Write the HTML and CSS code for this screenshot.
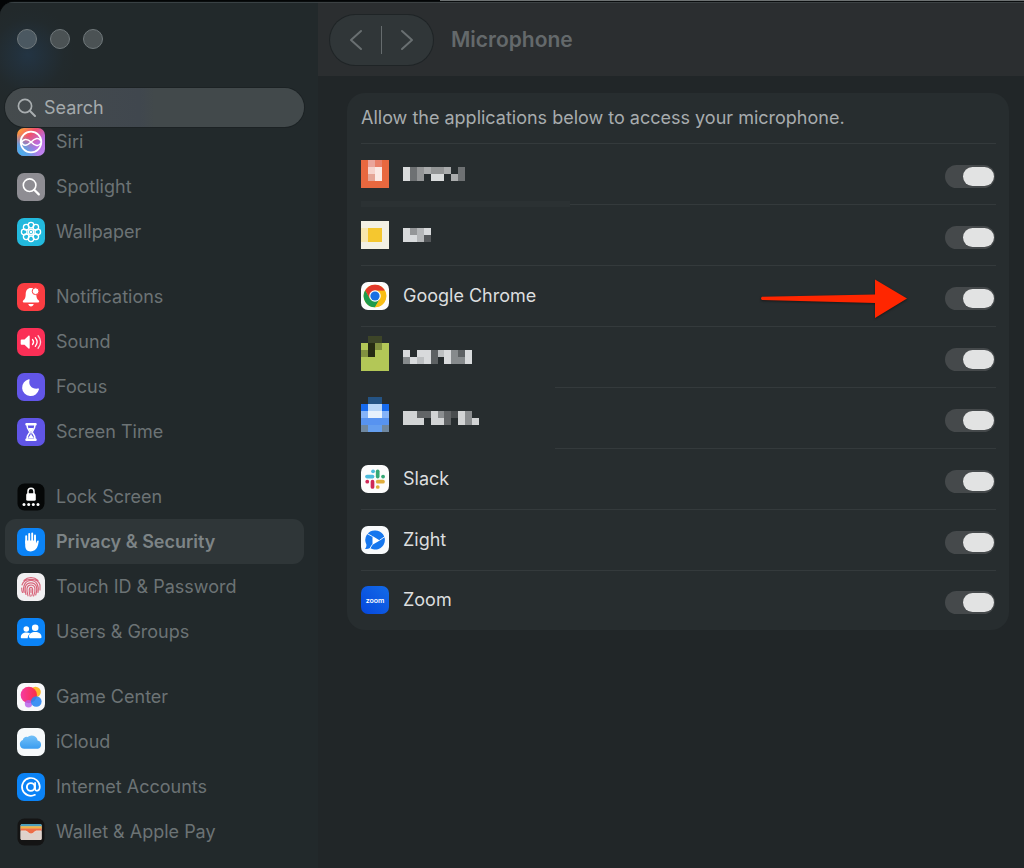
FILE: index.html
```html
<!DOCTYPE html>
<html lang="en">
<head>
<meta charset="utf-8">
<title>Microphone</title>
<link rel="stylesheet" href="styles.css">
</head>
<body>
<div class="window">
  <aside class="sidebar">
    <div class="lights">
      <button class="light" aria-label="Close"></button>
      <button class="light" aria-label="Minimize"></button>
      <button class="light" aria-label="Zoom"></button>
    </div>
    <label class="search">
      <svg width="20" height="20" viewBox="0 0 20 20" fill="none" stroke="#a9aeb0" stroke-width="1.7" stroke-linecap="round"><circle cx="8" cy="8" r="6.6"/><path d="M12.8 12.8 18 18" stroke-width="2"/></svg>
      <input type="search" placeholder="Search" aria-label="Search">
    </label>
    <nav class="nav">
      <div class="group">
        <a class="item" href="#siri"><svg class="icon" viewBox="0 0 28 28"><defs><linearGradient id="si" x1="0" y1="0" x2="1" y2="1"><stop offset="0" stop-color="#ffb52e"/><stop offset=".35" stop-color="#f0506c"/><stop offset=".65" stop-color="#b96be0"/><stop offset="1" stop-color="#c08cf5"/></linearGradient><radialGradient id="sb" cx="0" cy="1" r=".8"><stop offset="0" stop-color="#38b6f5"/><stop offset=".5" stop-color="#5aa8e8" stop-opacity=".9"/><stop offset="1" stop-color="#5aa8e8" stop-opacity="0"/></radialGradient></defs><rect width="28" height="28" rx="7" fill="url(#si)"/><rect width="28" height="28" rx="7" fill="url(#sb)"/><g fill="none" stroke="#fff" stroke-width="1.8"><circle cx="14" cy="14" r="10.3"/><path d="M4 15c2-4 6-5 10-1s8 5 10 1M4 13c2 6 6 5 10 1s8-5 10-1" stroke-width="1.6"/></g></svg><span>Siri</span></a>
        <a class="item" href="#spotlight"><svg class="icon" viewBox="0 0 28 28"><rect width="28" height="28" rx="7" fill="#8e8d93"/><g fill="none" stroke="#fff" stroke-linecap="round"><circle cx="12.6" cy="12.2" r="6.3" stroke-width="1.6"/><path d="m17.2 16.8 4.6 4.6" stroke-width="2.2"/></g></svg><span>Spotlight</span></a>
        <a class="item" href="#wallpaper"><svg class="icon" viewBox="0 0 28 28"><rect width="28" height="28" rx="7" fill="#23b9dd"/><g fill="none" stroke="#fff" stroke-width="1.3"><circle cx="14" cy="14" r="2.6"/><circle cx="14" cy="7.2" r="2.8"/><circle cx="18.8" cy="9.2" r="2.8"/><circle cx="20.8" cy="14" r="2.8"/><circle cx="18.8" cy="18.8" r="2.8"/><circle cx="14" cy="20.8" r="2.8"/><circle cx="9.2" cy="18.8" r="2.8"/><circle cx="7.2" cy="14" r="2.8"/><circle cx="9.2" cy="9.2" r="2.8"/></g><circle cx="14" cy="14" r="1.2" fill="#fff"/></svg><span>Wallpaper</span></a>
      </div>
      <div class="group">
        <a class="item" href="#notifications"><svg class="icon" viewBox="0 0 28 28"><rect width="28" height="28" rx="7" fill="#fb3d42"/><path d="M14 5c-3.6 0-5.2 2.6-5.3 6-.1 4.2-.9 5-2.5 6.6-.7.7-.5 1.9.6 1.9h14.4c1.100 0 1.300-1.200.6-1.900-1.600-1.600-2.400-2.400-2.500-6.600C19.200 7.600 17.600 5 14 5zM11.300 21h5.400c-.3 1.600-1.400 2.400-2.700 2.400s-2.400-.8-2.700-2.400z" fill="#fff"/><circle cx="18.600" cy="8.200" r="3.400" fill="#fff" stroke="#fb3d42" stroke-width="1"/></svg><span>Notifications</span></a>
        <a class="item" href="#sound"><svg class="icon" viewBox="0 0 28 28"><rect width="28" height="28" rx="7" fill="#fb2f56"/><path d="M4.500 11.500h3l4-3.700c.5-.5 1.200-.2 1.200.5v11.600c0 .7-.7 1-1.200.5l-4-3.700h-3c-.5 0-.8-.3-.8-.8v-3.600c0-.5.3-.8.800-.8z" fill="#fff"/><g fill="none" stroke="#fff" stroke-width="1.300" stroke-linecap="round"><path d="M15.500 11.500c1.300 1.500 1.300 3.500 0 5M18.300 9.700c2.200 2.600 2.200 6 0 8.600"/><path d="M21.100 7.800c3.300 3.700 3.300 8.700 0 12.400" opacity=".8"/></g></svg><span>Sound</span></a>
        <a class="item" href="#focus"><svg class="icon" viewBox="0 0 28 28"><rect width="28" height="28" rx="7" fill="#6256e8"/><path d="M11.800 6.300c.6-.3 1 .1.800.7-1.500 4.800 2.300 9.700 8.600 8.600.7-.1 1 .3.700.9A8.500 8.500 0 1 1 11.800 6.300z" fill="#fff"/></svg><span>Focus</span></a>
        <a class="item" href="#screentime"><svg class="icon" viewBox="0 0 28 28"><rect width="28" height="28" rx="7" fill="#6055e6"/><g fill="none" stroke="#fff" stroke-width="1.500"><path d="M10 7c0 4 1.500 5 3 7-1.500 2-3 3-3 7M18 7c0 4-1.500 5-3 7 1.500 2 3 3 3 7"/></g><g fill="#fff"><rect x="8.300" y="5" width="11.400" height="2.500" rx="1"/><rect x="8.300" y="20.500" width="11.400" height="2.500" rx="1"/><path d="M11.200 10h5.600c-.5 1.600-1.500 2.400-2.400 3.400v3.300l2.700 3.600h-6.200l2.700-3.600v-3.300c-.900-1-1.900-1.800-2.400-3.400z"/></g></svg><span>Screen Time</span></a>
      </div>
      <div class="group">
        <a class="item" href="#lock"><svg class="icon" viewBox="0 0 28 28"><rect x=".5" y=".5" width="27" height="27" rx="7" fill="#050707"/><path d="M11 11V8.200a3 3 0 0 1 6 0V11" fill="none" stroke="#fff" stroke-width="1.500"/><rect x="9.200" y="10.200" width="9.600" height="7.600" rx="1.500" fill="#fff"/><g fill="#fff"><circle cx="7" cy="21.500" r="1.500"/><circle cx="11.700" cy="21.500" r="1.500"/><circle cx="16.300" cy="21.500" r="1.500"/><circle cx="21" cy="21.500" r="1.500"/></g></svg><span>Lock Screen</span></a>
        <a class="item current" href="#privacy" aria-current="page"><svg class="icon" viewBox="0 0 28 28"><rect width="28" height="28" rx="7" fill="#0b83f6"/><g stroke="#fff" stroke-linecap="round" stroke-width="1.900"><path d="M9.200 15V8.200M12.200 14V5.900M15.200 14V5.500M18 15V7.400"/></g><path d="M8.200 12.500h10.700v3.200l1-2.400c.5-1.100 2-.9 1.800.3-.5 3.300-1.500 9.800-8 9.800-4 0-5.500-3-5.500-6z" fill="#fff"/></svg><span>Privacy &amp; Security</span></a>
        <a class="item" href="#touchid"><svg class="icon" viewBox="0 0 28 28"><rect width="28" height="28" rx="7" fill="#f1f0f2"/><g fill="none" stroke="#d8647a" stroke-width="1.150" stroke-linecap="round"><path d="M7 7.500c4-4 10-4 14 0M5 12C7 4.500 21 4.500 23 12v5M4.700 15c0 2 0 3 .8 4.500M7 19.500c-1.500-7 1.500-12 7-12s8.200 5 7 12M9 21.500c-2-7-.5-11.700 5-11.700s7 5.200 4.700 12.200M11 22.800c-2-6.300-1.500-10.800 3-10.800s5 4.700 2.600 11M13.200 23.300c-1.600-5-1.200-9 .8-9s2.200 4 .8 8.500M14 16.500v3"/></g></svg><span>Touch ID &amp; Password</span></a>
        <a class="item" href="#users"><svg class="icon" viewBox="0 0 28 28"><rect width="28" height="28" rx="7" fill="#0b83f6"/><g fill="#fff"><circle cx="9.300" cy="11" r="2.800"/><path d="M3.800 19.200c0-3 2.300-4.800 5.500-4.800 1.600 0 2.900.4 3.900 1.200-1.600 1.200-2.400 2.700-2.500 4.600H4.800c-.7 0-1-.3-1-1z"/><circle cx="18.200" cy="9.800" r="3.300"/><path d="M11.900 19c0-3 2.600-4.900 6.300-4.900s6.300 1.900 6.300 4.900c0 .8-.4 1.200-1.200 1.200H13.100c-.8 0-1.200-.4-1.200-1.200z"/></g></svg><span>Users &amp; Groups</span></a>
      </div>
      <div class="group">
        <a class="item" href="#gamecenter"><svg class="icon" viewBox="0 0 28 28"><defs><linearGradient id="gc" x1="0" y1="0" x2="1" y2="0"><stop offset="0" stop-color="#f53ba2"/><stop offset="1" stop-color="#fb2f45"/></linearGradient></defs><rect width="28" height="28" rx="7" fill="#f8f8fa"/><circle cx="18.500" cy="9" r="5.300" fill="#fdb92c"/><circle cx="11.800" cy="12" r="8.200" fill="url(#gc)"/><circle cx="11.500" cy="20.800" r="3.700" fill="#b55be8" opacity=".8"/><circle cx="19.300" cy="18.500" r="5.300" fill="#2a86f2" opacity=".9"/></svg><span>Game Center</span></a>
        <a class="item" href="#icloud"><svg class="icon" viewBox="0 0 28 28"><defs><linearGradient id="ic" x1="0" y1="0" x2="0" y2="1"><stop offset="0" stop-color="#72c0f8"/><stop offset="1" stop-color="#3a9df0"/></linearGradient></defs><rect width="28" height="28" rx="7" fill="#f6f9fb"/><path d="M7.200 20.700a4.500 4.500 0 0 1-1.400-8.700 3.500 3.500 0 0 1 4.700-2.900A6.100 6.100 0 0 1 20.600 12.500a4.200 4.200 0 0 1 .3 8.200z" fill="url(#ic)"/></svg><span>iCloud</span></a>
        <a class="item" href="#accounts"><svg class="icon" viewBox="0 0 28 28"><rect width="28" height="28" rx="7" fill="#0b83f6"/><g fill="none" stroke="#fff" stroke-linecap="round"><circle cx="13.800" cy="14" r="3.900" stroke-width="1.900"/><path d="M18.100 9.800v5.700c0 3.400 4.700 3 4.700-1.700a8.900 8.900 0 1 0-4.800 8" stroke-width="1.700"/></g></svg><span>Internet Accounts</span></a>
        <a class="item" href="#wallet"><svg class="icon" viewBox="0 0 28 28"><rect x=".5" y=".5" width="27" height="27" rx="7" fill="#141414"/><rect x="3.600" y="6" width="21" height="16" rx="1.500" fill="#e9dcd5"/><path d="M3.600 8.500V7.400Q3.600 6 5 6h18.200q1.400 0 1.400 1.400v1.100z" fill="#4a9dba"/><path d="M3.600 8.300h21v2.500h-21z" fill="#efb143"/><path d="M3.600 10.500h21v2H20c-1.200 0-2 .5-3 1.500-2 2-4 2-6 0-1-1-1.800-1.500-3-1.500H3.600z" fill="#ed6d47"/><path d="M3.600 13.200H8c1.200 0 1.800.5 2.800 1.400 2 1.900 4.400 1.900 6.400 0 1-.9 1.600-1.400 2.800-1.400h4.600v7.300q0 1.500-1.500 1.500h-18q-1.500 0-1.500-1.500z" fill="#dfd2cb"/></svg><span>Wallet &amp; Apple Pay</span></a>
      </div>
    </nav>
  </aside>
  <main class="main">
    <header class="toolbar">
      <div class="pager">
        <button aria-label="Back"><svg width="14" height="22" viewBox="0 0 14 22"><path d="M12 2 2 11l10 9"/></svg></button>
        <span class="bar"></span>
        <button aria-label="Forward"><svg width="14" height="22" viewBox="0 0 14 22"><path d="m2 2 10 9-10 9"/></svg></button>
      </div>
      <h1>Microphone</h1>
    </header>
    <section class="card">
      <p class="intro">Allow the applications below to access your microphone.</p>
      <ul class="apps">
        <li class="app">
          <label for="a1"><svg class="mosaic" width="28" height="28" viewBox="0 0 4 4"><path fill="#e8683f" d="M0 0h4v4H0z"/><path fill="#e98069" d="M2 0h1v1H2z"/><path fill="#eaa59b" d="M1 0h1v1H1z"/><path fill="#f6d3cc" d="M1 1h1v1H1z"/><path fill="#fbe9e4" d="M2 1h1v2H2z"/><path fill="#e5a596" d="M1 2h1v1H1z"/></svg>
          <svg class="mosaic" width="62" height="14" viewBox="0 0 9 2"><path fill="#d9dbdc" d="M0 0h1v2H0zM4 1h2v1H4z"/><path fill="#6e7173" d="M1 0h1v2H1zM8 0h1v2H8z"/><path fill="#939596" d="M2 0h1v2H2zM4 0h2v1H4z"/><path fill="#aaacad" d="M3 0h1v1H3zM6 0h1v1H6zM7 1h1v1H7z"/></svg></label>
          <input id="a1" class="switch" type="checkbox" role="switch" aria-label="First application" checked>
        </li>
        <li class="app smudged">
          <label for="a2"><svg class="mosaic" width="28" height="28" viewBox="0 0 4 4"><path fill="#f3f0e4" d="M0 0h4v4H0z"/><path fill="#f7e6ad" d="M0 1h1v1H0zM0 2h1v1H0z"/><path fill="#f5c72f" d="M1 1h2v2H1z"/></svg>
          <svg class="mosaic" width="28" height="14" viewBox="0 0 4 2"><path fill="#d8dadc" d="M0 0h1v2H0zM1 1h1v1H1zM3 0h1v1H3z"/><path fill="#949698" d="M1 0h1v1H1z"/><path fill="#b4b6b8" d="M2 0h1v2H2z"/><path fill="#55585b" d="M3 1h1v1H3z"/></svg></label>
          <input id="a2" class="switch" type="checkbox" role="switch" aria-label="Second application" checked>
        </li>
        <li class="app">
          <label for="a3"><svg class="icon" viewBox="0 0 28 28"><rect width="28" height="28" rx="7" fill="#fcfcfc"/><circle cx="14" cy="14" r="11.300" fill="#f8bd14"/><path d="M14 14 4.200 8.350A11.300 11.300 0 0 1 23.800 8.350H14z" fill="#e2392b"/><path d="M4.200 8.350A11.300 11.300 0 0 0 14 25.300l4.900-8.500L14 14l-4.900 2.800z" fill="#1e9b4c"/><path d="M14 8.350h9.800L9.100 16.800 4.200 8.350z" fill="#e2392b"/><path d="M14 8.700h9.950A11.300 11.300 0 0 1 14 25.300l4.900-8.500z" fill="#f8bd14"/><circle cx="14" cy="14" r="5.800" fill="#fff"/><circle cx="14" cy="14" r="4.600" fill="#1a70e4"/></svg><span>Google Chrome</span></label>
          <svg class="arrow" width="148" height="42" viewBox="0 0 148 42"><path d="M2 18.700 115 16.500V1.500L147 20.500 115 40v-15L2 22q-2-1.600 0-3.300z" fill="#ff2600"/></svg>
          <input id="a3" class="switch" type="checkbox" role="switch" checked>
        </li>
        <li class="app">
          <label for="a4"><svg class="mosaic tall" width="28" height="35" viewBox="0 0 4 5"><path fill="#3d4528" d="M1 0h2v1H1z"/><path fill="#b3c757" d="M0 1h4v4H0z"/><path fill="#262b13" d="M1 1h1v2H1z"/><path fill="#829140" d="M0 2h1v1H0zM2 1h1v1H2z"/></svg>
          <svg class="mosaic" width="69" height="14" viewBox="0 0 10 2"><path fill="#d8dadc" d="M0 0h1v1H0zM2 0h2v1H2zM1 1h1v1H1zM3 1h1v1H3zM6 0h1v2H6zM9 0h1v2H9z"/><path fill="#bcbfc1" d="M2 1h1v1H2zM5 0h1v1H5z"/><path fill="#868a8c" d="M0 1h1v1H0zM7 0h1v2H7zM8 1h1v1H8z"/><path fill="#5d6163" d="M4 0h1v2H4zM8 0h1v1H8z"/></svg></label>
          <input id="a4" class="switch" type="checkbox" role="switch" aria-label="Fourth application" checked>
        </li>
        <li class="app partial">
          <label for="a5"><svg class="mosaic tall" width="28" height="35" viewBox="0 0 4 5"><path fill="#245384" d="M1 0h2v1H1z"/><path fill="#176bee" d="M0 1h4v1H0z"/><path fill="#b9d6f7" d="M1 1h2v1H1z"/><path fill="#85b3f8" d="M0 2h4v1H0z"/><path fill="#e7f1fc" d="M1 2h2v1H1z"/><path fill="#5793f0" d="M0 3h4v1H0z"/><path fill="#6f879f" d="M0 4h4v1H0z"/><path fill="#649eef" d="M1 4h2v1H1z"/></svg>
          <svg class="mosaic" width="76" height="14" viewBox="0 0 11 2"><path fill="#d2d4d5" d="M0 0h2v2H0zM2 1h1v1H2zM4 0h1v2H4zM5 1h1v1H5zM8 0h1v2H8zM10 1h1v1h-1z"/><path fill="#626567" d="M2 0h2v1H2zM6 0h1v2H6z"/><path fill="#8b8e90" d="M5 0h1v1H5zM9 0h1v2H9z"/><path fill="#494d4f" d="M7 0h1v1H7z"/></svg></label>
          <input id="a5" class="switch" type="checkbox" role="switch" aria-label="Fifth application" checked>
        </li>
        <li class="app partial">
          <label for="a6"><svg class="icon" viewBox="0 0 28 28"><rect width="28" height="28" rx="7" fill="#fcfcfc"/><g stroke-width="3.700" stroke-linecap="round"><path d="M6 11.600h5.500" stroke="#4bbbdc"/><path d="M12 6.300h.1" stroke="#4bbbdc"/><path d="M16.700 6.300v5.300" stroke="#35a875"/><path d="M22 11.600h.1" stroke="#35a875"/><path d="M16.700 16.700H22" stroke="#e0ad3c"/><path d="M16.700 22h.1" stroke="#e0ad3c"/><path d="M11.500 16.700V22" stroke="#cf2857"/><path d="M6.200 16.700h.1" stroke="#cf2857"/></g></svg><span>Slack</span></label>
          <input id="a6" class="switch" type="checkbox" role="switch" checked>
        </li>
        <li class="app">
          <label for="a7"><svg class="icon" viewBox="0 0 28 28"><rect width="28" height="28" rx="7" fill="#f8fafc"/><path d="M14.300 4.500a9.500 9.500 0 1 1-5.200 17.400c-1.600.9-3.200 1.200-5.100 1 1.200-1.200 1.500-2.600 1.400-4.500A9.500 9.500 0 0 1 14.300 4.500z" fill="#1576ee"/><path d="M11.500 10v8.800l7.300-4.400z" fill="#fff"/><g fill="none" stroke="#fff" stroke-width=".9"><path d="m6 7.500 5.500 3M18.500 14.300 24 10.500M11.500 18.300l-2.500 4"/></g></svg><span>Zight</span></label>
          <input id="a7" class="switch" type="checkbox" role="switch" checked>
        </li>
        <li class="app">
          <label for="a8"><svg class="icon" viewBox="0 0 28 28"><defs><linearGradient id="zm" x1="1" y1="0" x2="0" y2="1"><stop offset="0" stop-color="#136be8"/><stop offset="1" stop-color="#0647dd"/></linearGradient></defs><rect width="28" height="28" rx="7" fill="url(#zm)"/><text x="14" y="16.500" text-anchor="middle" class="zoomword">zoom</text></svg><span>Zoom</span></label>
          <input id="a8" class="switch" type="checkbox" role="switch" checked>
        </li>
      </ul>
    </section>
  </main>
</div>
</body>
</html>
```
FILE: styles.css
```css
* { box-sizing: border-box; }
body {
  margin: 0;
  padding-top: 2px;
  background: linear-gradient(90deg, #030506 0 43%, #6d7172 43%);
  font: 18px/24px Inter, "Liberation Sans", sans-serif;
}
button { padding: 0; border: 0; background: none; }
.window {
  display: grid;
  grid-template-columns: 318px 1fr;
  min-height: calc(100vh - 2px);
  overflow: hidden;
  border-top-left-radius: 14px;
  background: #212628;
  box-shadow: 0 0 0 1px #0a0d0e;
}
.sidebar {
  padding: 26px 14px 0 5px;
  border-top: 1px solid #394144;
  background: radial-gradient(circle at 28px 52px, #233443 0, #222a2d 36px, transparent 48px), #22292b;
}
.lights { display: flex; gap: 13px; padding-left: 12px; }
.light {
  width: 20px;
  height: 20px;
  border: 1px solid #70787b;
  border-radius: 50%;
  background: #4b5254;
}
.light:first-child { background: #4b5861; }
.search {
  position: relative;
  z-index: 1;
  display: flex;
  align-items: center;
  gap: 7px;
  height: 39px;
  margin-top: 39px;
  padding: 0 12px;
  border-radius: 20px;
  background: linear-gradient(90deg, #454b4d, #40474e 45%, #42494b 50%);
  box-shadow: 0 0 0 1px #1c2224;
}
.search input {
  flex: 1;
  min-width: 0;
  padding: 0;
  border: 0;
  outline: 0;
  background: none;
  color: #a9aeb0;
  font: inherit;
}
.search input::placeholder { color: #a5aaac; opacity: 1; }
.nav {
  display: flex;
  flex-direction: column;
  gap: 20px;
  margin-top: -8px;
}
.item {
  display: flex;
  align-items: center;
  gap: 11px;
  height: 45px;
  padding-left: 12px;
  border-radius: 11px;
  color: #6c7375;
  text-decoration: none;
}
.item.current { background: #2f3638; color: #7d8486; font-weight: 600; }
.icon { flex: none; width: 28px; height: 28px; }
.toolbar {
  display: flex;
  align-items: center;
  gap: 18px;
  height: 74px;
  padding-left: 12px;
  border-top: 1px solid #3c4143;
  background: #2b2e30;
}
.pager {
  display: flex;
  align-items: center;
  justify-content: center;
  gap: 18px;
  width: 103px;
  height: 50px;
  border-radius: 25px;
  background: #303638;
  box-shadow: 0 0 0 1px #1f2426;
}
.pager button { display: flex; }
.pager path { fill: none; stroke: #696f71; stroke-width: 2; stroke-linecap: round; stroke-linejoin: round; }
.bar { width: 1px; height: 28px; background: #666c6e; }
h1 { margin: 0; color: #64696b; font-size: 21px; font-weight: 600; }
.card {
  margin: 17px 15px 20px 29px;
  padding: 0 13px 0 14px;
  border-radius: 18px;
  background: #272d2f;
}
.intro { margin: 0; padding: 13px 0; color: #a7acae; }
.apps { margin: 0; padding: 0; list-style: none; }
.app {
  position: relative;
  display: flex;
  align-items: center;
  justify-content: space-between;
  height: 61px;
  background: linear-gradient(#343a3c, #343a3c) no-repeat 100% 0 / 100% 1px;
}
.app:last-child { height: 60px; }
.app label { display: flex; align-items: center; gap: 14px; color: #dcdedf; }
.app.partial { background-size: calc(100% - 194px) 1px; }
.app.smudged::before {
  content: "";
  position: absolute;
  left: 0;
  top: -3px;
  width: 209px;
  height: 6px;
  background: #2b3133;
}
.mosaic { flex: none; shape-rendering: crispEdges; }
.mosaic.tall { margin-bottom: 7px; }
.arrow {
  position: absolute;
  right: 88px;
  top: 13px;
  filter: drop-shadow(0 1px 1px #16191a);
}
.switch {
  appearance: none;
  display: flex;
  justify-content: flex-end;
  width: 50px;
  height: 23px;
  margin: 5px 1px 0 0;
  padding: 2px 1px;
  border-radius: 12px;
  background: #45494b;
}
.switch::before {
  content: "";
  width: 31px;
  height: 19px;
  border-radius: 10px;
  background: #e2e3e3;
}
.switch:not(:checked) { justify-content: flex-start; }
.zoomword { fill: #fff; font: 600 7px Inter, sans-serif; }
```
